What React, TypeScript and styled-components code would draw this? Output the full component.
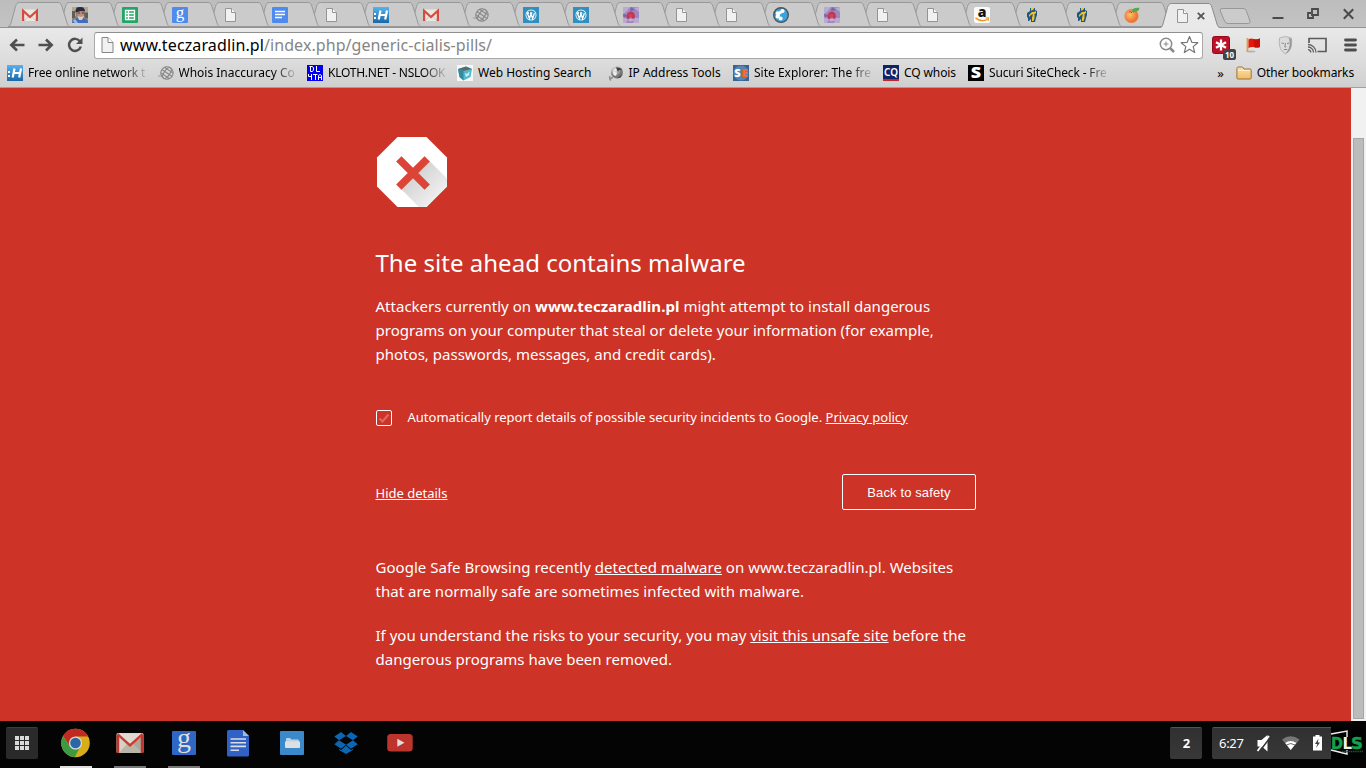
import React from 'react';
import styled, { createGlobalStyle } from 'styled-components';

const GlobalStyle = createGlobalStyle`
  * { box-sizing: border-box; }
  body { margin: 0; background: #cd3326; overflow: hidden; font-family: 'Noto Sans', sans-serif; }
  svg { display: block; flex: none; overflow: visible; }
`;

const Screen = styled.div`
  width: 1366px;
  height: 768px;
  display: flex;
  flex-direction: column;
  overflow: hidden;
`;

/* ---------- tab strip ---------- */
const TabStrip = styled.div`
  height: 28px;
  flex: none;
  display: flex;
  align-items: flex-end;
  padding-left: 8px;
  background: linear-gradient(#bdbdbd, #c3c3c3);
  border-bottom: 1px solid #929292;
`;
const TabBox = styled.div<{ $z: number; $active?: boolean }>`
  position: relative;
  z-index: ${p => p.$z};
  flex: none;
  width: ${p => (p.$active ? 60 : 62)}px;
  height: 25px;
  margin-right: ${p => (p.$active ? -1.5 : -11.91)}px;
  margin-bottom: ${p => (p.$active ? -1 : 0)}px;
  padding: 5px 0 0 14px;
  display: flex;
  gap: 7px;
`;
const TabShape = styled.svg`
  position: absolute;
  left: 0;
  top: 0;
  z-index: -1;
`;
const NewTab = styled.svg`
  align-self: center;
  margin-top: 5px;
`;
const WindowButtons = styled.div`
  margin-left: auto;
  align-self: center;
  display: flex;
  align-items: center;
  gap: 24px;
  padding-right: 12px;
`;

/* ---------- toolbar ---------- */
const Toolbar = styled.div`
  height: 34px;
  flex: none;
  display: flex;
  align-items: center;
  padding: 0 7px 0 9px;
  background: linear-gradient(#e9e9e9, #dcdcdc);
`;
const NavButtons = styled.div`
  display: flex;
  gap: 13px;
  width: 85px;
  align-items: center;
`;
const Omnibox = styled.div`
  width: 1109px;
  height: 27px;
  display: flex;
  align-items: center;
  padding: 0 3px 0 6px;
  background: #fff;
  border: 1px solid #a9a9a9;
  border-top-color: #8f8f8f;
  border-radius: 3px;
`;
const Url = styled.div`
  flex: 1;
  margin-left: 5px;
  font-size: 16px;
  line-height: 24px;
  letter-spacing: 0.07px;
  color: #858585;
  white-space: nowrap;
  b { font-weight: 400; color: #000; letter-spacing: 0.12px; }
`;
const Extensions = styled.div`
  flex: 1;
  display: flex;
  align-items: center;
  justify-content: space-between;
  padding-left: 9px;
`;
const Extension = styled.div`
  position: relative;
  display: flex;
`;
const Badge = styled.div`
  position: absolute;
  left: 11px;
  top: 13px;
  width: 13px;
  height: 11px;
  border-radius: 2px;
  background: #444;
  color: #fff;
  font: bold 8px/11px 'Noto Sans', sans-serif;
  text-align: center;
`;

/* ---------- bookmarks ---------- */
const BookmarkBar = styled.div`
  height: 26px;
  flex: none;
  display: flex;
  align-items: center;
  padding: 0 12px 3px 7px;
  background: linear-gradient(#dcdcdc, #cfcfcf);
  border-bottom: 1px solid #a0a0a0;
`;
const Bookmark = styled.div<{ $w: number }>`
  width: ${p => p.$w}px;
  flex: none;
  display: flex;
  align-items: center;
  gap: 5px;
`;
const BookmarkLabel = styled.span<{ $fade?: boolean; $track?: number }>`
  white-space: nowrap;
  font-size: 12px;
  line-height: 18px;
  letter-spacing: ${p => p.$track || 0}px;
  color: #000;
  ${p => p.$fade && 'mask-image: linear-gradient(to right, #000 calc(100% - 22px), rgba(0, 0, 0, 0.15));'}
`;
const BookmarkEnd = styled.div`
  margin-left: auto;
  display: flex;
  align-items: center;
  gap: 5px;
  font-size: 12px;
  line-height: 18px;
  letter-spacing: -0.14px;
  white-space: nowrap;
`;
const Chevrons = styled.span`
  margin-right: 7px;
  font-size: 13px;
`;

/* ---------- page ---------- */
const Viewport = styled.div`
  height: 633px;
  flex: none;
  display: flex;
`;
const Page = styled.main`
  width: 1351px;
  padding-top: 48px;
  background: #cd3326;
  color: #fff;
`;
const Column = styled.div`
  width: 600.5px;
  margin-left: 375.5px;
`;
const Warning = styled.svg`
  margin-left: 0.5px;
`;
const Heading = styled.h1`
  margin: 39px 0 15px;
  font-size: 24px;
  font-weight: 400;
  line-height: 32px;
  letter-spacing: 0.02px;
  white-space: nowrap;
`;
const Paragraph = styled.p`
  margin: 0 0 20px;
  font-size: 15px;
  line-height: 24px;
  letter-spacing: ${(p: { $track?: number }) => p.$track ?? 0.014}px;
  white-space: nowrap;
  b { letter-spacing: 0.06px; }
`;
const Link = styled.a`
  color: #fff;
  text-decoration: underline;
`;
const ReportRow = styled.div`
  display: flex;
  align-items: center;
  gap: 15.5px;
  height: 18px;
  margin-top: 42px;
  padding-left: 0.5px;
  font-size: 13px;
  line-height: 18px;
  white-space: nowrap;
`;
const CheckBox = styled.span`
  width: 16px;
  height: 16px;
  margin-top: 1px;
  border: 1px solid #fff;
  border-radius: 2px;
  display: flex;
  align-items: center;
  justify-content: center;
`;
const ActionRow = styled.div`
  display: flex;
  align-items: center;
  justify-content: space-between;
  height: 36px;
  margin: 48px 0 45px;
  font-size: 13px;
`;
const DetailsToggle = styled(Link)`
  padding-top: 2px;
`;
const SafetyButton = styled.button`
  width: 134px;
  height: 36px;
  padding: 0;
  border: 1px solid #fff;
  border-radius: 2px;
  background: transparent;
  color: #fff;
  font: 13px 'Liberation Sans', Arial, sans-serif;
  letter-spacing: 0.12px;
`;
const ScrollTrack = styled.div`
  width: 15px;
  padding: 50px 2px 2px;
  background: #f1f1f1;
`;
const ScrollThumb = styled.div`
  height: 581px;
  width: 11px;
  background: #bcbcbc;
  border: 1px solid #a6a6a6;
`;

/* ---------- shelf ---------- */
const Shelf = styled.div`
  height: 47px;
  flex: none;
  display: flex;
  padding: 0 3px 0 6px;
  background: #040404;
`;
const ShelfTile = styled.div<{ $w: number; $mr?: number }>`
  width: ${p => p.$w}px;
  height: 32px;
  margin-top: 6px;
  margin-right: ${p => p.$mr || 0}px;
  display: flex;
  align-items: center;
  justify-content: center;
  background: linear-gradient(#303030, #383838);
  border-top: 1px solid #555;
  border-radius: 2px;
  color: #fff;
  font-size: 13px;
  line-height: 29px;
  padding-bottom: 1px;
`;
const LauncherTile = styled(ShelfTile)`
  background: #2a2a2a;
  border-top-color: #3c3c3c;
`;
const Apps = styled.div`
  display: flex;
  gap: 22px;
  flex: 1;
`;
const ShelfApp = styled.div<{ $line?: string }>`
  width: 32px;
  height: 47px;
  padding-top: 6px;
  border-bottom: 2px solid ${p => p.$line || 'transparent'};
`;
const Tray = styled(ShelfTile)`
  justify-content: flex-start;
  padding-left: 7px;
  border-radius: 2px 0 0 2px;
`;
const Clock = styled.span`
  width: 37px;
  letter-spacing: -0.3px;
`;
const Count = styled.b`
  font-size: 13px;
  padding-left: 1px;
`;

/* ---------- small icons, 16x16 ---------- */
const Ico = ({ children, w = 16, h = 16 }: { children: React.ReactNode; w?: number; h?: number }) => (
  <svg width={w} height={h} viewBox={`0 0 ${w} ${h}`}>{children}</svg>
);

const FileIcon = () => (
  <Ico>
    <path d="M3.5 1.5H9.5L13.5 5.5V14.5H3.5Z" fill="#f1f1f1" stroke="#949494" />
    <path d="M9.5 1.5V5.5H13.5" fill="#fff" stroke="#949494" />
  </Ico>
);
const GmailIcon = () => (
  <Ico>
    <rect x="0" y="2.5" width="16" height="11.5" rx="1" fill="#e9e7e2" />
    <path d="M2 14L7 8.5M14 14L9 8.5" stroke="#c5c1b8" strokeWidth=".8" />
    <path d="M1.1 14V3.8L8 10L14.9 3.8V14" fill="none" stroke="#d64b3e" strokeWidth="2.2" />
  </Ico>
);
const PortraitIcon = () => (
  <Ico>
    <rect width="16" height="16" fill="#8a8478" />
    <path d="M0 0H4V9H0ZM12 0H16V5H12Z" fill="#b5a68c" />
    <path d="M0 4H3V11H0ZM12 6H16V11H13Z" fill="#625d55" />
    <path d="M0 16C1 12 4 10.5 8 11C12 10.5 15 12 16 15V16Z" fill="#3f6ec0" />
    <path d="M3 12L6 16H3L1 14Z" fill="#9dbcec" />
    <path d="M5 4H12V10Q9 14 6 11Z" fill="#bf8f78" />
    <path d="M3.5 5.5Q3 0 8 0Q13 0 13 4.5L9 4Z" fill="#262c3d" />
    <path d="M5.5 9L8.500 10L12 9L10 13L7 13Z" fill="#d5d0cb" />
    <path d="M5.5 6H8M9.5 6H12" stroke="#4c3c38" />
  </Ico>
);
const SheetIcon = () => (
  <Ico>
    <rect width="16" height="16" rx="1" fill="#23a566" />
    <path d="M3.5 3.5H12.5V12.5H3.5ZM3.5 6.5H12.5M3.5 9.5H12.5M6.5 3.5V12.5" fill="none" stroke="#fff" strokeWidth="1.3" />
  </Ico>
);
const GIcon = () => (
  <Ico>
    <rect width="16" height="16" rx="1" fill="#4f8bed" />
    <text x="8" y="11" textAnchor="middle" fontFamily="Liberation Serif" fontSize="17" fill="#fff">g</text>
  </Ico>
);
const DocIcon = () => (
  <Ico>
    <rect width="16" height="16" rx="1" fill="#4e8af0" />
    <path d="M3 4.5H13M3 7.5H13M3 10.5H10" stroke="#fff" strokeWidth="1.3" />
  </Ico>
);
const HIcon = () => (
  <Ico>
    <defs><linearGradient id="hg" x2="0" y2="1"><stop stopColor="#5bb0ee" /><stop offset="1" stopColor="#1868a8" /></linearGradient></defs>
    <rect width="16" height="16" fill="url(#hg)" />
    <path d="M1 6h2v2H1zM1 10h2v2H1z" fill="#fff" />
    <path d="M7.5 3.5L5.7 12.5M14 3.5L12.2 12.5M7 8H13" stroke="#fff" strokeWidth="2.2" />
  </Ico>
);
const GlobeIcon = () => (
  <Ico>
    <g fill="none" stroke="#888" strokeWidth="1.1" transform="rotate(35 9 8)">
      <circle cx="9" cy="8" r="6.2" />
      <ellipse cx="9" cy="8" rx="2.8" ry="6.2" />
      <path d="M2.8 8H15.2M4 4.7H14M4 11.3H14" />
    </g>
    <path d="M0 11H3" stroke="#999" />
  </Ico>
);
const WpIcon = () => (
  <Ico>
    <rect width="16" height="16" fill="#2f8fc0" />
    <circle cx="8" cy="8" r="5.5" fill="#e9f3f8" />
    <circle cx="8" cy="8" r="4.6" fill="#2f8fc0" />
    <path d="M4.3 6L6.4 11.5L8 7L9.6 11.5L11.4 6.3M3.8 6H6M7 6H9.3" fill="none" stroke="#fff" strokeWidth="1.3" />
  </Ico>
);
const FlowerIcon = () => (
  <Ico>
    <rect width="16" height="16" fill="#9d88bf" />
    <path d="M0 0H7L3 5L0 7ZM11 1L16 0V5ZM0 10L5 12L3 16H0ZM12 11H16V16H10Z" fill="#bda9cf" />
    <path d="M8 0L12 3L7 4ZM0 7L4 8L1 11Z" fill="#7564a8" />
    <path d="M3.5 9Q4 5 8 4.5Q12 5 12 10L10 12L8 10L5 12Q3 12 3.5 9Z" fill="#c33552" />
    <path d="M5 8Q8 6 10 8L9 10H6Z" fill="#cf4254" />
    <path d="M5 13Q8 10.500 12 13L7 14.500Z" fill="#d3a8c8" />
  </Ico>
);
const BlueDotIcon = () => (
  <Ico>
    <circle cx="8" cy="8" r="7.3" fill="#3ba2dc" stroke="#4a5560" strokeWidth="1.4" />
    <g fill="#fff">
      <circle cx="9.5" cy="4" r="2.1" /><circle cx="4.7" cy="6.2" r="2" /><circle cx="7.2" cy="5.6" r="1.700" />
      <circle cx="4.6" cy="9.6" r="2" /><circle cx="7.6" cy="11.5" r="2" /><circle cx="5.500" cy="8" r="1.500" />
    </g>
  </Ico>
);
const AmazonIcon = () => (
  <Ico>
    <rect width="16" height="16" rx="2" fill="#fafafa" />
    <text x="8" y="9.6" textAnchor="middle" fontFamily="Open Sans" fontWeight="800" fontSize="14" fill="#161616">a</text>
    <path d="M1.5 10.8Q8 16 13.5 12" fill="none" stroke="#f29a1f" strokeWidth="1.5" />
    <path d="M11.5 11L14.7 10.8L14 14" fill="none" stroke="#f29a1f" strokeWidth="1.1" />
  </Ico>
);
const StatueIcon = () => (
  <Ico>
    <path d="M6 1H11V3L13 4V8L12 11L11 15H7V12L5 14H4V11L3 10V6L6 4Z" fill="#24567e" />
    <path d="M7 1H10V2L8 3.5H7ZM8 5H10L12 4V6L10.5 7V11L9.5 14H8V11L9 7L7 8L5 10V8Z" fill="#f4c623" />
  </Ico>
);
const OrangeIcon = () => (
  <Ico>
    <defs><radialGradient id="og" cx=".4" cy=".4"><stop stopColor="#ffc375" /><stop offset="1" stopColor="#ee7730" /></radialGradient></defs>
    <circle cx="7.5" cy="9" r="6.7" fill="url(#og)" stroke="#e77b39" strokeWidth=".6" />
    <path d="M7.5 5Q8 0 15.5 .8Q15 6 7.5 5Z" fill="#57a84b" />
    <path d="M5 5Q7 4 8 6" stroke="#8f5a25" fill="none" />
  </Ico>
);
const NslookupIcon = () => (
  <Ico>
    <rect width="16" height="16" fill="#0000ee" />
    <g fill="none" stroke="#fff" strokeWidth="1">
      <path d="M2.5 1.5H5.5L6.5 3V5L5.5 6.5H3.5V1.5M9.5 1V6.5H13" />
      <path d="M1.5 9V11.5H5M4.5 9V15M6 9.5H10.5M8.5 9.5V15M11.5 15V10.5L13 9.5L14.5 10.5V15M11.5 12.5H14.5" />
    </g>
  </Ico>
);
const CubeIcon = () => (
  <Ico>
    <rect width="16" height="16" fill="#f6f7f7" />
    <path d="M1 4L9 1.5L15 4L13.5 12L6.5 15.5L2.5 12Z" fill="#57b8cb" />
    <path d="M1 4L6.5 6L6.5 15.5L2.5 12Z" fill="#318b9f" />
    <path d="M1 4L9 1.5L15 4L6.5 6Z" fill="#596b70" />
    <path d="M8 8L10 9L12.5 6.5L12 10L9 12Z" fill="#c8f2f6" />
  </Ico>
);
const BallIcon = () => (
  <Ico>
    <defs><radialGradient id="bg" cx=".35" cy=".3"><stop stopColor="#f4f4f4" /><stop offset="1" stopColor="#777" /></radialGradient></defs>
    <circle cx="9" cy="7.500" r="6" fill="url(#bg)" />
    <path d="M8 2.500Q12 2 14 5L11 5L10 7ZM11 12L14.500 9L12.500 12.500L9 13.500Z" fill="#3e3e3e" />
    <path d="M5 6L9 8L8 11L5.500 10Z" fill="#efefef" />
    <path d="M2 11Q1 14 3 15.5M5 12.500Q3 12.5 3 14" stroke="#8b8b8b" strokeWidth="1.3" fill="none" />
  </Ico>
);
const SeIcon = () => (
  <Ico>
    <rect width="16" height="16" fill="#386494" />
    <circle cx="8" cy="8" r="7.500" fill="#5585b5" />
    <text x="1.3" y="12" textLength="6.4" lengthAdjust="spacingAndGlyphs" fontFamily="Open Sans" fontWeight="800" fontSize="11" fill="#fff">S</text>
    <text x="8.2" y="12" textLength="6.4" lengthAdjust="spacingAndGlyphs" fontFamily="Open Sans" fontWeight="800" fontSize="11" fill="#ff6a10">E</text>
  </Ico>
);
const CqIcon = () => (
  <Ico>
    <rect width="16" height="16" fill="#0f2467" />
    <rect y="14" width="16" height="2" fill="#c3262d" />
    <text x="1" y="11.3" textLength="14" lengthAdjust="spacingAndGlyphs" fontFamily="Noto Sans" fontWeight="600" fontSize="11.5" fill="#fff">CQ</text>
  </Ico>
);
const SucuriIcon = () => (
  <Ico>
    <rect width="16" height="16" fill="#000" />
    <text x="2.8" y="13.4" textLength="10.4" lengthAdjust="spacingAndGlyphs" fontFamily="Open Sans" fontWeight="800" fontSize="15" fill="#fff">S</text>
  </Ico>
);
const FolderIcon = () => (
  <Ico>
    <defs><linearGradient id="fg" x2="0" y2="1"><stop stopColor="#fbe3ac" /><stop offset="1" stopColor="#eebd68" /></linearGradient></defs>
    <path d="M.9 13V3.5Q1 2 2.4 2H6.5L8 4H14Q15.2 4 15.2 5.2V13Q15 14 14 14H2Q1 14 .9 13Z" fill="url(#fg)" stroke="#a07038" />
    <path d="M2 5.5H14" stroke="#fff0cb" />
  </Ico>
);

const tabs = [
  GmailIcon, PortraitIcon, SheetIcon, GIcon, FileIcon, DocIcon, FileIcon, HIcon, GmailIcon, GlobeIcon,
  WpIcon, WpIcon, FlowerIcon, FileIcon, FileIcon, BlueDotIcon, FlowerIcon, FileIcon, FileIcon, AmazonIcon,
  StatueIcon, StatueIcon, OrangeIcon,
];
const bookmarks = [
  { icon: HIcon, label: 'Free online network t', w: 150.5, fade: true, track: -0.12 },
  { icon: GlobeIcon, label: 'Whois Inaccuracy Co', w: 149.5, fade: true },
  { icon: NslookupIcon, label: 'KLOTH.NET - NSLOOK', w: 150, fade: true, track: -0.25 },
  { icon: CubeIcon, label: 'Web Hosting Search', w: 150.5 },
  { icon: BallIcon, label: 'IP Address Tools', w: 125.5 },
  { icon: SeIcon, label: 'Site Explorer: The fre', w: 150, fade: true },
  { icon: CqIcon, label: 'CQ whois', w: 85, track: -0.1 },
  { icon: SucuriIcon, label: 'Sucuri SiteCheck - Fre', w: 151, fade: true, track: -0.15 },
];

/* ---------- shelf icons, 32x32 ---------- */
const ChromeApp = () => (
  <Ico w={32} h={32}>
    <circle cx="15.5" cy="16" r="14.3" fill="#d9ad15" />
    <path d="M3.1 8.9A14.3 14.3 0 0 1 28.2 9.4H15.5L9.8 19.3Z" fill="#c12a22" />
    <path d="M3.1 8.9L9.8 19.3L15.5 22.6L19.5 21.2L14.7 30.3A14.3 14.3 0 0 1 3.1 8.9Z" fill="#3c9a43" />
    <circle cx="15.5" cy="16" r="6.6" fill="#d5dadc" />
    <circle cx="15.5" cy="16" r="5.3" fill="#2d66a5" />
  </Ico>
);
const GmailApp = () => (
  <Ico w={32} h={32}>
    <rect x="2.5" y="6" width="27" height="20" rx="1.5" fill="#d5d1c4" />
    <path d="M5 26L13 17L16 19.5L19 17L28 26Z" fill="#b9b5a8" />
    <path d="M16 19.5L29 8V26H28L19 17Z" fill="#aba79c" />
    <path d="M3.9 26V8M28.1 8V26" stroke="#c1352e" strokeWidth="2.6" />
    <path d="M4 6.4H28L16 17Z" fill="#dedbd0" />
    <path d="M3.5 7.2L16 18.5L28.5 7.2" fill="none" stroke="#c93b33" strokeWidth="2.4" />
  </Ico>
);
const GApp = () => (
  <Ico w={32} h={32}>
    <rect x="4" y="4" width="24" height="24" rx="1" fill="#2e67c6" />
    <text x="16" y="20.3" textAnchor="middle" fontFamily="Liberation Serif" fontSize="28" fill="#dedede">g</text>
  </Ico>
);
const DocsApp = () => (
  <Ico w={32} h={32}>
    <path d="M6.5 3H21L27 9V28Q27 29.5 25.5 29.5H6.5Q5 29.5 5 28V4.5Q5 3 6.5 3Z" fill="#2f62c4" />
    <path d="M21 3L27 9H21Z" fill="#a1b9e2" />
    <path d="M8.5 12H24M8.5 15.7H24M8.5 19.4H24M8.5 23.2H17" stroke="#dadde3" strokeWidth="1.6" />
  </Ico>
);
const FilesApp = () => (
  <Ico w={32} h={32}>
    <rect x="4" y="4" width="24" height="24" rx="1" fill="#3a8acb" />
    <path d="M10 18V11.5Q10 11 11 11H14L15.5 12.5H22Q23 12.5 23 14V18Z" fill="#b8d3e8" />
    <path d="M9 14.5H24V20Q24 21 23 21H10Q9 21 9 20Z" fill="#dedfe0" />
  </Ico>
);
const DropboxApp = () => (
  <Ico w={32} h={32}>
    <path d="M11 5L16 9L9 13.3L4.3 9.5ZM21 5L27.7 9.5L23 13.3L16 9ZM9 13.3L16 17.7L11 21.7L4.3 17.3ZM23 13.3L27.7 17.3L21 21.7L16 17.7ZM16 18.8L21 22.9L23 21.7V23L16 27L9 23V21.7L11 22.9Z" fill="#0a67b5" />
  </Ico>
);
const YoutubeApp = () => (
  <Ico w={32} h={32}>
    <rect x="3.2" y="7" width="25.5" height="17.5" rx="3.5" fill="#bd342d" />
    <path d="M13.3 11.8L20.5 15.8L13.3 19.8Z" fill="#e2dcda" />
  </Ico>
);
const shelfApps = [
  { icon: ChromeApp, line: '#dedede' },
  { icon: GmailApp, line: '#777' },
  { icon: GApp, line: '#777' },
  { icon: DocsApp }, { icon: FilesApp }, { icon: DropboxApp }, { icon: YoutubeApp },
];

export default function App() {
  return (
    <Screen>
      <GlobalStyle />
      <TabStrip>
        {tabs.map((Icon, i) => (
          <TabBox key={i} $z={30 - i}>
            <TabShape width="62" height="25">
              <path d="M0 24.5C2 24 2.5 22.5 3 21L7.5 4.5C8.3 2 9 .5 11.5 .5H50C52.5 .5 53 2 54 4.5L59 21C59.6 23 60 24 62 24.5Z" fill="#cbcbcb" stroke="#989898" />
            </TabShape>
            <Icon />
          </TabBox>
        ))}
        <TabBox $z={40} $active>
          <TabShape width="61" height="26">
            <path d="M0 25C2 24.5 2.5 23 3 21.5L7.5 4.5C8.3 2 9 .5 11.5 .5H48C50.5 .5 51.2 2 52 4.5L57 21.5C57.5 23.5 58 24.5 60.5 25V26H0Z" fill="#e9e9e9" />
            <path d="M0 24.5C2 24 2.5 22.5 3 21L7.5 4.5C8.3 2 9 .5 11.5 .5H48C50.5 .5 51.2 2 52 4.5L57 21C57.5 23 58 24 60.5 24.5" fill="none" stroke="#8d8d8d" />
          </TabShape>
          <FileIcon />
          <Ico w={8} h={16}><path d="M.8 4.8L7.2 11.2M7.2 4.8L.8 11.2" stroke="#555" strokeWidth="1.8" /></Ico>
        </TabBox>
        <NewTab width="33" height="17">
          <path d="M3 .5H24Q26.5 .5 27.2 2.5L31 13Q31.8 15.5 29.5 15.5H9Q6.5 15.5 5.5 13L1.3 3Q.5 .5 3 .5Z" fill="#cbcbcb" stroke="#989898" />
        </NewTab>
        <WindowButtons>
          <Ico w={11} h={12}><path d="M.5 10H11.5" stroke="#4a4a4a" strokeWidth="2" /></Ico>
          <Ico w={12} h={12}><path d="M5 1H11V7H5ZM4 5H1V10H6V8" fill="none" stroke="#4a4a4a" strokeWidth="1.8" /></Ico>
          <Ico w={11} h={12}><path d="M.8 1.3L10.2 10.7M10.2 1.3L.8 10.7" stroke="#4a4a4a" strokeWidth="2" /></Ico>
        </WindowButtons>
      </TabStrip>

      <Toolbar>
        <NavButtons>
          <Ico><path d="M15.5 8H3M8 2.5L2.3 8L8 13.5" fill="none" stroke="#505050" strokeWidth="2.6" /></Ico>
          <Ico><path d="M.5 8H13M8 2.5L13.7 8L8 13.5" fill="none" stroke="#505050" strokeWidth="2.6" /></Ico>
          <Ico><path d="M13 4.5A6 6 0 1 0 13.8 9.5" fill="none" stroke="#505050" strokeWidth="2.5" /><path d="M15.5 .5V7H9Z" fill="#505050" /></Ico>
        </NavButtons>
        <Omnibox>
          <svg width="14" height="16" viewBox="1.5 0 14 16">
            <path d="M2.5 .5H8.5L13.5 5.5V15.5H2.5Z" fill="#f1f1f1" stroke="#858585" />
            <path d="M8.5 .5V5.5H13.5" fill="#fff" stroke="#858585" />
          </svg>
          <Url><b>www.teczaradlin.pl</b>/index.php/generic-cialis-pills/</Url>
          <svg width="20" height="17" viewBox="0 0 20 17">
            <circle cx="7" cy="7" r="5.7" fill="none" stroke="#8a8a8a" strokeWidth="1.5" />
            <path d="M11 11L15 15" stroke="#8a8a8a" strokeWidth="2.5" />
            <path d="M4.5 7H9.5M7 4.5V9.5" stroke="#8a8a8a" />
          </svg>
          <svg width="20" height="20" viewBox="-1.5 0 20 20">
            <path d="M9 1.5L11.3 7.3L17.3 7.7L12.7 11.6L14.2 17.6L9 14.3L3.8 17.6L5.3 11.6L.7 7.7L6.7 7.3Z" fill="#fff" stroke="#777" strokeWidth="1.2" strokeLinejoin="round" />
          </svg>
        </Omnibox>
        <Extensions>
          <Extension>
            <Ico w={18} h={18}>
              <rect x=".5" y=".5" width="17" height="17" rx="2" fill="#bd1029" stroke="#910b1d" />
              <path d="M9 3.5V14.5M4 6.2L14 11.8M14 6.2L4 11.8" stroke="#fff" strokeWidth="2.3" />
            </Ico>
            <Badge>10</Badge>
          </Extension>
          <Ico>
            <ellipse cx="6" cy="14.5" rx="4.5" ry="1" fill="#b5b5b5" />
            <path d="M2.5 1V15" stroke="#d9a33d" strokeWidth="1.8" />
            <path d="M3.5 2.5Q6 1 8.5 2Q11 3 15 1.5V10Q11 11 8.5 10Q6 9.5 3.5 11Z" fill="#e6170f" />
            <path d="M8.5 2Q11 3 15 1.5V10Q13 11 9.5 10.2Z" fill="#c90f0a" />
          </Ico>
          <svg width="16" height="20" viewBox="-1.5 0 16 20">
            <path d="M2 3Q8 0 14 3Q15 12 11.5 16L8 19L4.5 16Q1 12 2 3Z" fill="#dcdcdc" stroke="#aaa" strokeWidth=".8" />
            <path d="M11 3Q14 9 10 16L8 18.5Q13 17 14 10V4Z" fill="#9a9a9a" />
            <path d="M4 8L6.5 8.5M9.5 8.5L12 8M8 8L7.3 12H8.7M6.3 14.5H9.7" stroke="#8a8a8a" fill="none" />
          </svg>
          <svg width="20" height="16" viewBox="-1.5 0 20 16">
            <path d="M1.5 6V1.5H18.5V14.5H10" fill="none" stroke="#5c5c5c" strokeWidth="1.7" />
            <path d="M.5 7.5A8 8 0 0 1 8.5 15.5M.5 10A5.5 5.5 0 0 1 6 15.5M.5 12.7A2.8 2.8 0 0 1 3.3 15.5" fill="none" stroke="#5c5c5c" strokeWidth="1.3" />
          </svg>
          <Ico w={18} h={16}><path d="M4.500 3H14.500M4.500 8H14.500M4.500 13H14.500" stroke="#4d4d4d" strokeWidth="2.8" strokeLinecap="round" /></Ico>
        </Extensions>
      </Toolbar>

      <BookmarkBar>
        {bookmarks.map(({ icon: Icon, label, w, fade, track }) => (
          <Bookmark key={label} $w={w}>
            <Icon />
            <BookmarkLabel $fade={fade} $track={track}>{label}</BookmarkLabel>
          </Bookmark>
        ))}
        <BookmarkEnd>
          <Chevrons>»</Chevrons>
          <FolderIcon />
          <span>Other bookmarks</span>
        </BookmarkEnd>
      </BookmarkBar>

      <Viewport>
        <Page>
          <Column>
            <Warning width="72" height="72" viewBox="0 0 72 72">
              <defs><linearGradient id="sh" x1=".2" y1=".2" x2=".9" y2=".9"><stop stopColor="#cfcfcf" /><stop offset="1" stopColor="#f5f5f5" /></linearGradient></defs>
              <path d="M21.5 1H50.5L71 21.5V50.5L50.5 71H21.5L1 50.5V21.5Z" fill="#fff" />
              <path d="M53.5 25L71 42.5V50.5L50.5 71H43L25 53Z" fill="url(#sh)" />
              <path d="M22.8 22.8L51.2 51.2M51.2 22.8L22.8 51.2" stroke="#db4437" strokeWidth="7.5" />
            </Warning>
            <Heading>The site ahead contains malware</Heading>
            <Paragraph>
              Attackers currently on <b>www.teczaradlin.pl</b> might attempt to install dangerous<br />
              programs on your computer that steal or delete your information (for example,<br />
              photos, passwords, messages, and credit cards).
            </Paragraph>
            <ReportRow>
              <CheckBox>
                <Ico w={12} h={12}><path d="M1.5 6.5L4.5 9.5L10.5 2.5" fill="none" stroke="#de6a60" strokeWidth="2" /></Ico>
              </CheckBox>
              <span>Automatically report details of possible security incidents to Google. <Link>Privacy policy</Link></span>
            </ReportRow>
            <ActionRow>
              <DetailsToggle>Hide details</DetailsToggle>
              <SafetyButton>Back to safety</SafetyButton>
            </ActionRow>
            <Paragraph $track={0.028}>
              Google Safe Browsing recently <Link>detected malware</Link> on www.teczaradlin.pl. Websites<br />
              that are normally safe are sometimes infected with malware.
            </Paragraph>
            <Paragraph $track={0.01}>
              If you understand the risks to your security, you may <Link>visit this unsafe site</Link> before the<br />
              dangerous programs have been removed.
            </Paragraph>
          </Column>
        </Page>
        <ScrollTrack><ScrollThumb /></ScrollTrack>
      </Viewport>

      <Shelf>
        <LauncherTile $w={32} $mr={22}>
          <Ico w={14} h={14}>
            <path d="M0 0h4v4H0zM5 0h4v4H5zM10 0h4v4h-4zM0 5h4v4H0zM5 5h4v4H5zM10 5h4v4h-4zM0 10h4v4H0zM5 10h4v4H5zM10 10h4v4h-4z" fill="#d9d9d9" />
          </Ico>
        </LauncherTile>
        <Apps>
          {shelfApps.map(({ icon: Icon, line }, i) => (
            <ShelfApp key={i} $line={line}><Icon /></ShelfApp>
          ))}
        </Apps>
        <ShelfTile $w={32} $mr={10}><Count>2</Count></ShelfTile>
        <Tray $w={119}>
          <Clock>6:27</Clock>
          <Ico w={16} h={18}>
            <path d="M1.5 6H5.5L11.5 1V17.5L6 12.5H1.5Z" fill="#fff" />
            <path d="M3 18L14.5 3" stroke="#363636" strokeWidth="1.6" />
            <path d="M1.500 17L13 2" stroke="#fff" strokeWidth="1.8" />
          </Ico>
          <svg width="38" height="18" viewBox="-9.5 0 38 18">
            <path d="M.5 5.5Q9 -1 18 5.5L9.2 16Z" fill="#777" />
            <path d="M3.3 8.5Q9.2 4 15.2 8.5L9.2 16Z" fill="#fff" />
            <path d="M3.5 8.5Q9.2 4.5 15 8.5M5 11Q9.2 8 13.5 11" stroke="#555" fill="none" strokeWidth=".9" />
          </svg>
          <svg width="14" height="18" viewBox="-3 0 14 18">
            <path d="M0 2.5H2.5V1H6.5V2.5H9V16.5H0Z" fill="#fff" />
            <path d="M5.5 4.5L2 10H4.3L3 14L7 8.5H4.8Z" fill="#404040" />
          </svg>
        </Tray>
        <svg width="32" height="47" viewBox="0 0 32 47">
          <rect y="6" width="32" height="32" fill="#020202" />
          <path d="M0 13L16 10V16M0 29L16 33V29" fill="none" stroke="#eee" strokeWidth="1.4" />
          <text x="0" y="28" fontFamily="DejaVu Sans" fontWeight="700" fontSize="16.5" textLength="12" lengthAdjust="spacingAndGlyphs" fill="#12a24b" stroke="#12a24b" strokeWidth=".5">D</text>
          <text x="11.5" y="28" fontFamily="DejaVu Sans" fontWeight="700" fontSize="16.5" textLength="9.5" lengthAdjust="spacingAndGlyphs" fill="#f3f3f3">L</text>
          <text x="20" y="28" fontFamily="DejaVu Sans" fontWeight="700" fontSize="16.5" textLength="12" lengthAdjust="spacingAndGlyphs" fill="#12a24b" stroke="#12a24b" strokeWidth=".5">S</text>
          <path d="M11 30.5H32" stroke="#125c30" strokeWidth="1.5" strokeDasharray="1.5 .7" />
        </svg>
      </Shelf>
    </Screen>
  );
}
